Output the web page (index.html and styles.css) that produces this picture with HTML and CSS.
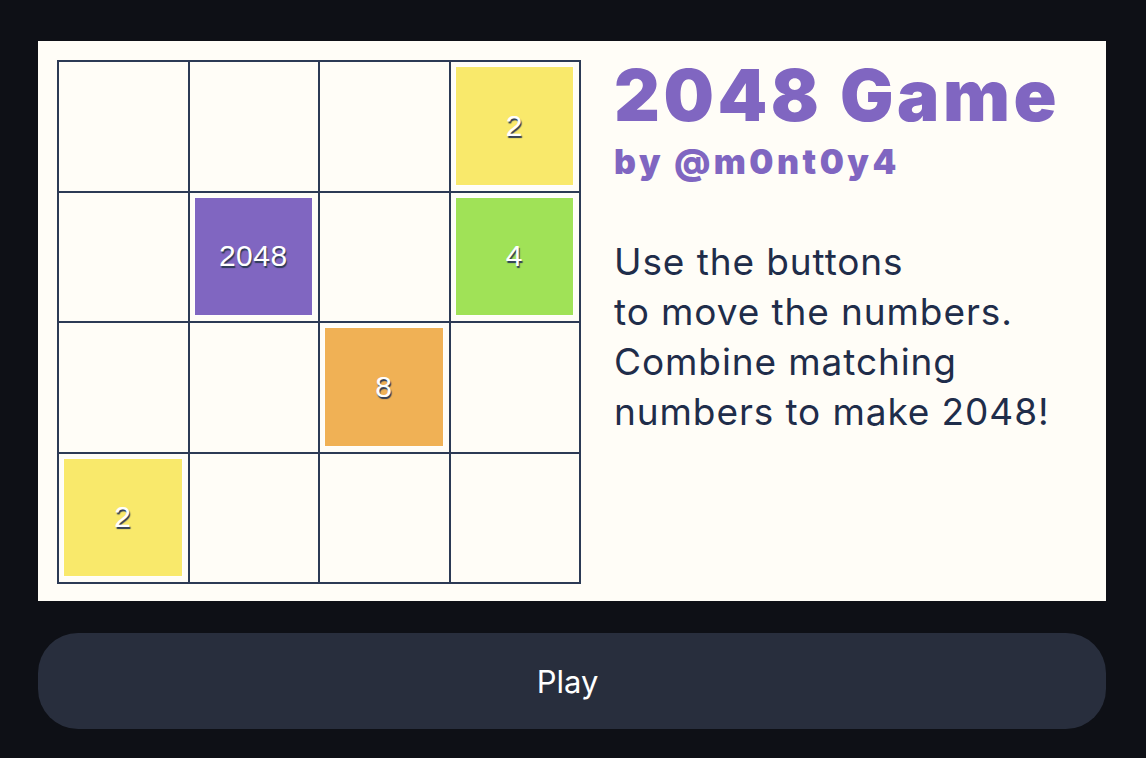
FILE: index.html
```html
<!DOCTYPE html>
<html>
<head>
<meta charset="utf-8">
<link rel="stylesheet" href="styles.css">
</head>
<body>
<main class="page">
  <section class="card">
    <div class="board">
      <div class="cell"></div>
      <div class="cell"></div>
      <div class="cell"></div>
      <div class="cell"><div class="tile t2">2</div></div>
      <div class="cell"></div>
      <div class="cell"><div class="tile t2048">2048</div></div>
      <div class="cell"></div>
      <div class="cell"><div class="tile t4">4</div></div>
      <div class="cell"></div>
      <div class="cell"></div>
      <div class="cell"><div class="tile t8">8</div></div>
      <div class="cell"></div>
      <div class="cell"><div class="tile t2">2</div></div>
      <div class="cell"></div>
      <div class="cell"></div>
      <div class="cell"></div>
    </div>
    <div class="info">
      <h1 class="title">2048 Game</h1>
      <p class="byline">by @m0nt0y4</p>
      <p class="desc">Use the buttons<br>to move the numbers.<br>Combine matching<br>numbers to make 2048!</p>
    </div>
  </section>
  <button class="play">Play</button>
</main>
</body>
</html>
```

FILE: styles.css
```css
html, body {
  margin: 0;
  padding: 0;
  background: #0e1016;
}
.page {
  width: 1068px;
  padding: 41px 0 0 38px;
  display: flex;
  flex-direction: column;
  gap: 32px;
}
.card {
  height: 560px;
  background: #fffdf7;
  display: flex;
  align-items: flex-start;
  padding: 19px 0 0 19px;
  box-sizing: border-box;
  gap: 33px;
}
.board {
  width: 524px;
  height: 524px;
  box-sizing: border-box;
  display: grid;
  grid-template-columns: repeat(4, 1fr);
  grid-template-rows: repeat(4, 1fr);
  gap: 2px;
  padding: 2px;
  background: #2c3a55;
}
.cell {
  background: #fffdf7;
  padding: 5px 6px 6px 5px;
  display: flex;
}
.tile {
  flex: 1;
  display: flex;
  align-items: center;
  justify-content: center;
  font-family: "Liberation Sans", Arial, sans-serif;
  font-size: 30px;
  letter-spacing: 0.5px;
  color: #ffffff;
  text-shadow: 1px 2px 1px #2c3a55;
  box-shadow: 0 0 0 1px rgba(255,255,255,0.6);
}
.t2 { background: #f9e96b; }
.t4 { background: #a0e257; }
.t8 { background: #f0b155; }
.t2048 { background: #8066c1; }
.info {
  display: flex;
  flex-direction: column;
}
.title {
  margin: 0;
  font-family: Inter, "Noto Sans", sans-serif;
  font-weight: 900;
  font-size: 71px;
  line-height: 70px;
  color: #8066c1;
  letter-spacing: 3.5px;
}
.byline {
  margin: 10px 0 0;
  font-family: Inter, "Noto Sans", sans-serif;
  font-weight: 900;
  font-size: 34px;
  line-height: 44px;
  color: #8066c1;
  letter-spacing: 3.5px;
}
.desc {
  margin: 53px 0 0;
  font-family: Inter, "Noto Sans", sans-serif;
  font-weight: 400;
  font-size: 37px;
  line-height: 50px;
  color: #1f2d4a;
  letter-spacing: 0.9px;
}
.play {
  height: 96px;
  border: none;
  border-radius: 40px;
  background: #282e3d;
  color: #ffffff;
  font-family: Inter, "Noto Sans", sans-serif;
  font-size: 31px;
  padding: 0 9px 0 0;
}
```
